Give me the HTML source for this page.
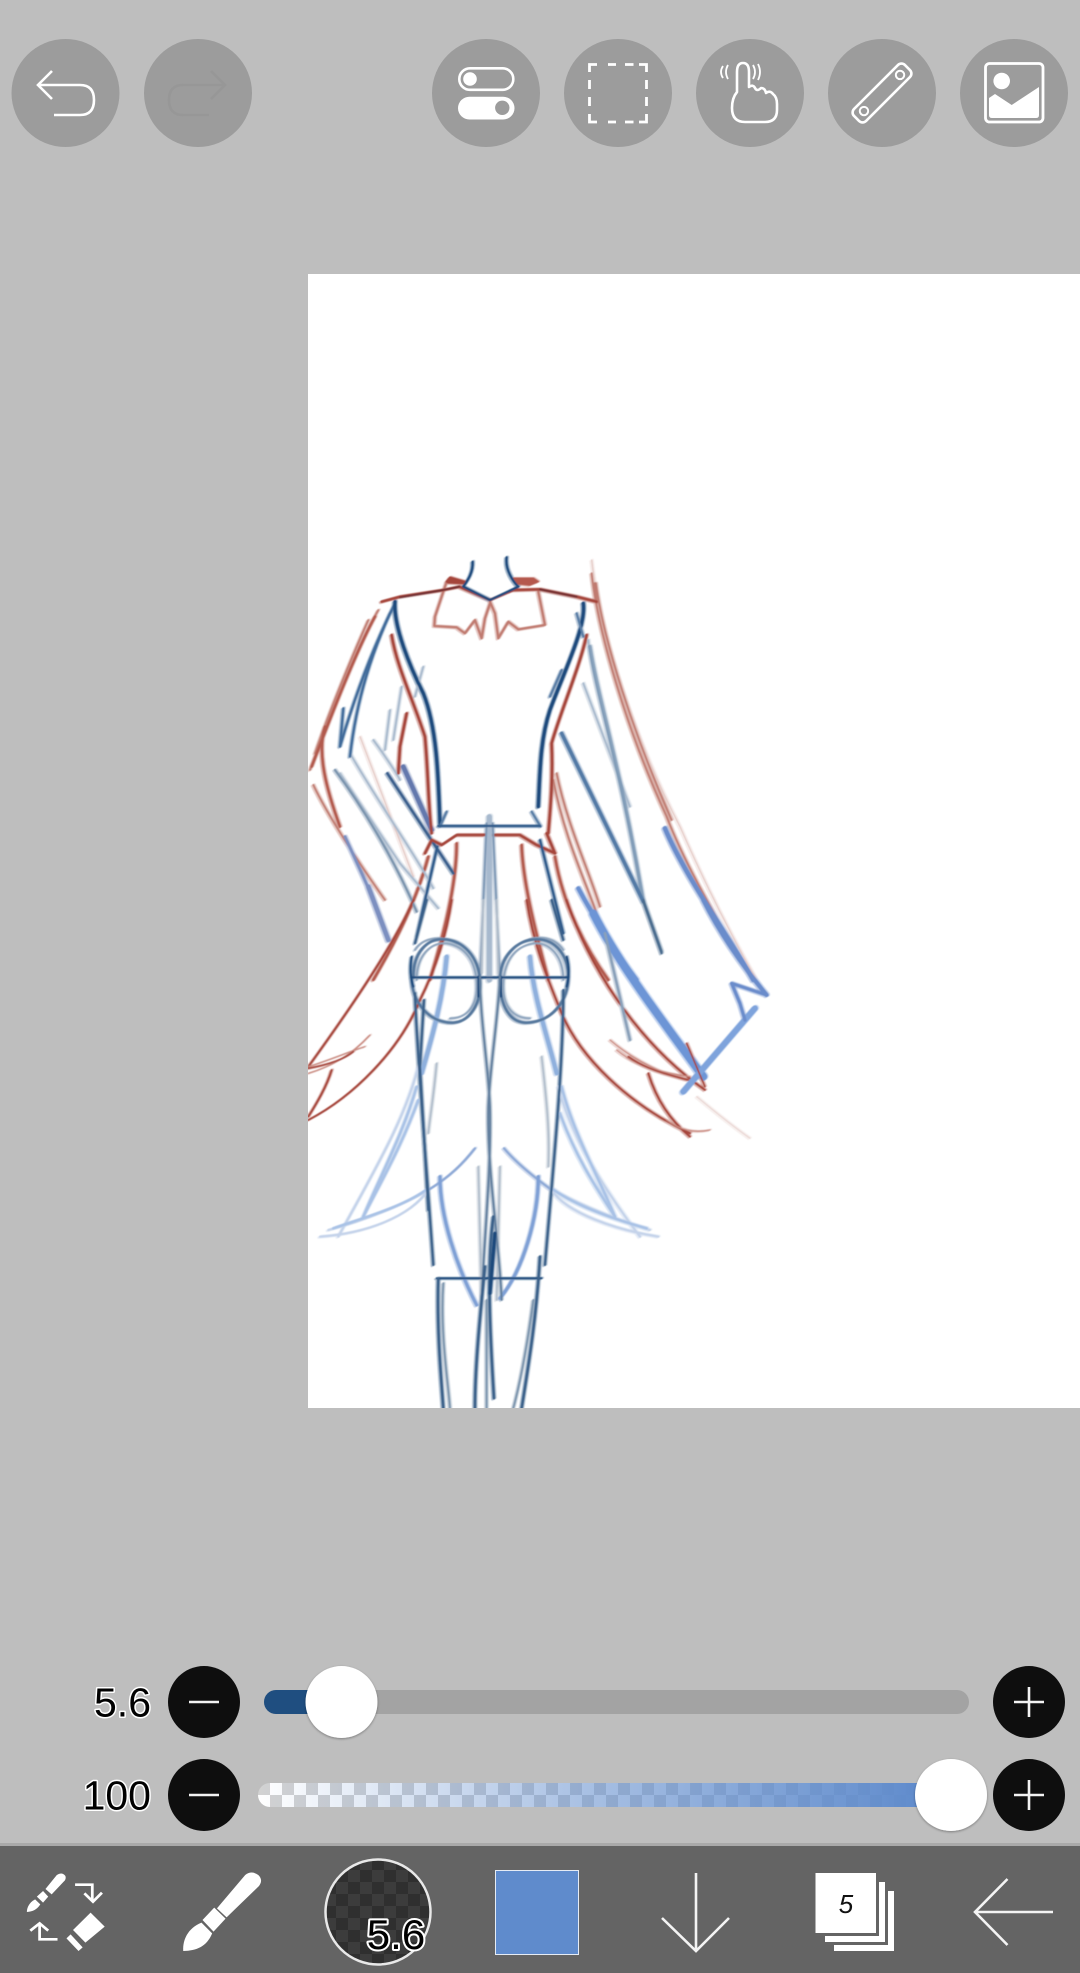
<!DOCTYPE html>
<html><head><meta charset="utf-8"><title>Drawing</title>
<style>
html,body{margin:0;padding:0;background:#bebebe;width:1080px;height:1973px;overflow:hidden}
svg{display:block}
text{font-family:"Liberation Sans",sans-serif}
</style></head><body>
<svg xmlns="http://www.w3.org/2000/svg" width="1080" height="1973" viewBox="0 0 1080 1973">
<defs>
<clipPath id="cv"><rect x="308" y="274" width="772" height="1134"/></clipPath>
<filter id="soft" x="-5%" y="-5%" width="110%" height="110%"><feGaussianBlur stdDeviation="0.6"/></filter>
<filter id="sh" x="-20%" y="-20%" width="140%" height="140%"><feDropShadow dx="0" dy="1" stdDeviation="1.2" flood-color="#000" flood-opacity=".35"/></filter>
<pattern id="chk" x="258" y="1783" width="24" height="24" patternUnits="userSpaceOnUse"><rect width="24" height="24" fill="#fff"/><rect width="12" height="12" fill="#d2d2d2"/><rect x="12" y="12" width="12" height="12" fill="#d2d2d2"/></pattern>
<pattern id="chk2" x="324" y="1858" width="24" height="24" patternUnits="userSpaceOnUse"><rect width="24" height="24" fill="#3c3c3c"/><rect width="12" height="12" fill="#2f2f2f"/><rect x="12" y="12" width="12" height="12" fill="#2f2f2f"/></pattern>
<linearGradient id="gr" gradientUnits="userSpaceOnUse" x1="258" y1="0" x2="925" y2="0"><stop offset="0" stop-color="#5f8bcc" stop-opacity="0"/><stop offset=".5" stop-color="#5f8bcc" stop-opacity=".55"/><stop offset="1" stop-color="#5f8bcc" stop-opacity="1"/></linearGradient>
</defs>
<rect width="1080" height="1973" fill="#bebebe"/>

<!-- canvas -->
<rect x="308" y="274" width="772" height="1134" fill="#fff"/>
<g clip-path="url(#cv)"><g filter="url(#soft)" fill="none" stroke-linecap="round" stroke-linejoin="round">
<use href="#sk" transform="translate(-1.6,1)" opacity=".4"/>
<use href="#sk" transform="translate(1.4,-.6)" opacity=".35"/>
<g id="sk">
<!-- upper section -->
<g transform="translate(300,540) scale(.3333)">
<g stroke="#e3c7c2" stroke-width="4"><path d="M875 60C900 280 1010 610 1140 860C1210 1020 1290 1180 1370 1320"/><path d="M180 590C230 720 290 880 340 1010"/></g>
<g stroke="#c17f74" stroke-width="6"><path d="M875 100C895 280 980 570 1100 830C1150 960 1230 1100 1300 1220"/><path d="M888 130C910 300 1000 580 1115 840"/><path d="M235 210C190 290 100 500 30 690"/><path d="M205 240C160 340 90 510 45 640"/><path d="M40 735C80 820 170 960 255 1080"/><path d="M770 700C800 850 870 1000 900 1100"/><path d="M760 720C790 880 850 1010 890 1120"/></g>
<g stroke="#b25a4e" stroke-width="8"><path d="M75 560C50 640 80 750 120 860"/><path d="M225 230C170 330 100 510 35 680"/><path d="M765 950C790 1100 860 1230 925 1320"/><path d="M220 1320C290 1200 350 1080 385 950"/><path d="M470 910C470 1050 420 1220 390 1320"/><path d="M665 915C670 1050 720 1220 745 1320"/></g>
<g stroke="#a9bacd" stroke-width="6"><path d="M305 440L280 600"/><path d="M270 510L255 630"/><path d="M220 600C250 640 290 700 300 720"/><path d="M120 700L300 970L415 1105"/><path d="M150 640C230 780 350 950 400 1045"/><path d="M850 430L990 800"/><path d="M865 300C880 450 960 670 1030 1085"/><path d="M370 380L345 470"/></g>
<path d="M105 690C180 790 280 950 350 1115" stroke="#7b94ae" stroke-width="7"/>
<path d="M870 320C895 480 960 670 1030 1085" stroke="#6f8eae" stroke-width="11" opacity=".7"/>
<g stroke="#3f6b9a" stroke-width="7"><path d="M285 190C230 300 170 450 120 620"/><path d="M270 220C220 330 170 470 150 650"/><path d="M130 505L120 620"/></g>
<path d="M785 580L1030 1085" stroke="#537aa6" stroke-width="11"/>
<path d="M1030 1085L1085 1240" stroke="#4c6d8f" stroke-width="7"/>
<path d="M310 680L395 870" stroke="#6478ad" stroke-width="14"/>
<path d="M262 700L460 1000" stroke="#3a5f8c" stroke-width="8"/>
<path d="M135 890C180 990 230 1090 265 1200" stroke="#7c8fc0" stroke-width="9"/>
<path d="M205 1040L265 1200" stroke="#7c8fc0" stroke-width="14"/>
<path d="M1095 865C1150 1000 1280 1180 1360 1320" stroke="#6b8ccb" stroke-width="14"/>
<path d="M835 1045C880 1130 950 1240 1010 1320" stroke="#6b90d0" stroke-width="13"/>
<g stroke="#a5453a" stroke-width="8"><path d="M275 285C290 380 340 480 375 590C385 700 385 800 395 880"/><path d="M320 520L300 620L295 700"/><path d="M860 285C840 380 780 520 755 610C760 720 750 820 745 880"/><path d="M375 940L395 900L425 915L470 885L660 885L710 915L765 940"/><path d="M740 880L765 940"/></g>
<g stroke="#1d4a7c" stroke-width="10"><path d="M285 185C280 260 330 380 370 460C410 560 415 700 420 850"/><path d="M850 190C860 260 790 400 750 510C720 600 720 700 715 800"/></g>
<g stroke="#5a7ea6" stroke-width="7"><path d="M830 220L850 290"/><path d="M785 390L750 470"/><path d="M440 815L420 860"/><path d="M695 815L722 860"/></g>
<path d="M568 830V1320" stroke="#a7b9ce" stroke-width="16"/>
<g stroke="#7f99b6" stroke-width="6"><path d="M560 850L540 1320"/><path d="M578 850L600 1320"/></g>
<g stroke="#2f5a8a" stroke-width="7"><path d="M415 858H720"/><path d="M412 920L350 1190"/><path d="M720 900L790 1180"/></g>
<g stroke="#c07a70" stroke-width="7"><path d="M440 125L405 230L403 258L470 262L495 280L525 240L545 295L555 235L570 190"/><path d="M715 155L735 255L655 268L625 245L595 295L585 220L570 185"/><path d="M885 130L890 190"/></g>
<path d="M245 185L300 170L430 150L478 140L570 180L640 150L720 148L830 170L890 185" stroke="#a5453a" stroke-width="8"/>
<path d="M300 172L430 150L478 140M720 148L830 170" stroke="#6d2f33" stroke-width="5"/>
<path d="M440 125L450 112L495 125L490 130L445 128Z" fill="#a5453a" stroke="#a5453a" stroke-width="6"/>
<path d="M640 115L700 115L715 125L690 135L645 130Z" fill="#b5594d" stroke="#b5594d" stroke-width="5"/>
<g stroke="#1d4a7c" stroke-width="7"><path d="M518 65C520 100 500 125 490 140"/><path d="M620 52C615 90 640 125 655 140"/><path d="M490 140L570 180L655 140"/></g>
</g>
<!-- lower section -->
<g transform="translate(300,900) scale(.3333)">
<g stroke="#c4d3ea" stroke-width="7"><path d="M85 990C200 960 320 910 385 870"/><path d="M1050 990C950 960 830 910 760 870"/><path d="M60 1010C200 1000 330 950 385 870"/><path d="M1075 1010C950 990 800 940 755 870"/><path d="M360 480C320 650 230 800 115 1010"/><path d="M775 560C810 700 900 850 1020 1010"/></g>
<g stroke="#a9c2e6" stroke-width="8"><path d="M355 600C300 750 240 850 190 950"/><path d="M780 640C830 780 900 880 945 950"/><path d="M350 560C310 700 240 830 190 950"/><path d="M785 560C820 700 900 840 945 950"/><path d="M100 985C200 950 310 920 385 865"/><path d="M1040 985C950 960 830 920 755 865"/></g>
<g stroke="#8ea9d6" stroke-width="7"><path d="M385 870C450 830 490 790 525 745"/><path d="M755 870C700 830 650 790 612 745"/></g>
<g stroke="#7fa0d5" stroke-width="10"><path d="M420 830C420 950 470 1100 530 1215"/><path d="M715 830C715 950 670 1110 600 1195"/></g>
<g stroke="#8fb0dd" stroke-width="13"><path d="M440 170C430 290 400 400 365 520"/><path d="M690 170C700 290 740 400 770 520"/></g>
<g stroke="#b3bfcc" stroke-width="6"><path d="M410 490C400 600 390 650 385 700"/><path d="M725 470C740 600 750 700 745 800"/><path d="M550 0L545 220M590 0L595 220"/><path d="M535 800L545 1200M600 800L590 1200"/></g>
<g stroke="#a5453a" stroke-width="6"><path d="M340 0C290 120 170 300 25 500"/><path d="M455 0C440 100 410 200 360 300C300 450 160 590 25 660"/><path d="M95 510C80 560 50 610 25 650"/><path d="M680 0C700 130 740 230 785 340C840 470 980 610 1170 700"/><path d="M800 0C860 180 1000 420 1215 570"/><path d="M1045 520C1070 600 1110 660 1170 710"/></g>
<g stroke="#c98a80" stroke-width="4"><path d="M25 520C90 500 150 470 210 405"/><path d="M25 500C90 480 160 450 195 440"/><path d="M930 420C1000 480 1100 530 1170 540"/><path d="M950 450C1010 500 1090 520 1170 530"/><path d="M1100 660C1140 690 1180 700 1230 690"/></g>
<path d="M25 505C80 495 130 480 160 455" stroke="#a5453a" stroke-width="5"/>
<path d="M985 470C1040 510 1110 525 1165 540" stroke="#a5453a" stroke-width="5"/>
<path d="M1190 590C1250 640 1300 680 1350 715" stroke="#e8d4d0" stroke-width="4"/>
<path d="M880 40C950 180 1070 340 1210 530" stroke="#6d95d6" stroke-width="24"/>
<path d="M915 100L990 420" stroke="#8aa0b9" stroke-width="8"/>
<path d="M1150 575L1365 325" stroke="#7ea3dc" stroke-width="18"/>
<path d="M1210 0C1260 100 1330 200 1400 285" stroke="#6b8ccb" stroke-width="13"/>
<path d="M1400 285L1340 265L1295 250L1320 310L1335 360" stroke="#6b8ccb" stroke-width="10"/>
<path d="M1160 430L1215 560" stroke="#a5453a" stroke-width="5"/>
<path d="M1030 0L1085 155" stroke="#4c6d8f" stroke-width="7"/>
<g stroke="#8ea4bd" stroke-width="6"><path d="M350 240C350 170 390 125 440 130C500 140 530 190 530 260C530 320 500 355 450 355"/><path d="M790 240C790 170 750 125 700 130C640 140 610 190 610 260C610 320 640 355 690 355"/><path d="M345 150C370 110 430 105 470 130"/><path d="M790 150C760 105 700 105 660 130"/></g>
<g stroke="#55779c" stroke-width="8"><path d="M340 230C340 160 380 115 430 118C490 120 535 170 540 240C545 310 510 365 460 368C390 370 335 310 335 230"/><path d="M600 240C600 170 650 118 710 118C770 118 805 170 805 230C805 300 760 365 680 368C630 368 600 320 600 240"/></g>
<g stroke="#1d4a7c" stroke-width="6"><path d="M335 170C330 200 330 230 340 260"/><path d="M800 170C808 200 808 230 800 260"/><path d="M333 232H805"/><path d="M535 230V290M603 230V290"/></g>
<g stroke="#3b6189" stroke-width="7"><path d="M345 280C350 450 380 800 400 1095"/><path d="M790 270C790 500 760 800 735 1095"/><path d="M380 0L345 130"/><path d="M755 0L790 120"/><path d="M372 300L360 500L385 930"/></g>
<g stroke="#64809f" stroke-width="6"><path d="M540 230C540 350 565 500 570 620C575 800 550 1050 545 1200"/><path d="M600 230C595 350 570 500 565 620C560 800 600 1050 605 1200"/></g>
<path d="M410 1135H725" stroke="#1d4a7c" stroke-width="6"/>
<g stroke="#3b6189" stroke-width="8"><path d="M415 1135C410 1300 425 1450 430 1525"/><path d="M555 1100C540 1250 525 1400 525 1525"/><path d="M720 1070C710 1250 685 1400 665 1525"/><path d="M580 950C560 1100 570 1300 582 1495"/></g>
<g stroke="#7d95ad" stroke-width="6"><path d="M430 1150C420 1300 445 1450 450 1525"/><path d="M700 1200C680 1350 660 1450 640 1525"/><path d="M560 1200V1525"/></g>
<path d="M585 1000L570 1180" stroke="#1d4a7c" stroke-width="10"/>
</g>
</g>
</g></g>

<!-- top buttons -->
<g fill="#9c9c9c"><circle cx="65.5" cy="93" r="54"/><circle cx="198" cy="93" r="54"/><circle cx="486" cy="93" r="54"/><circle cx="618" cy="93" r="54"/><circle cx="750" cy="93" r="54"/><circle cx="882" cy="93" r="54"/><circle cx="1014" cy="93" r="54"/></g>
<path d="M52 71L38 85L52 99M38 85H80Q94 85 94 100Q94 115 80 115H54" fill="none" stroke="#fff" stroke-width="2.6"/>
<path d="M211 71L225 85L211 99M225 85H183Q169 85 169 100Q169 115 183 115H209" fill="none" stroke="#979797" stroke-width="2.6"/>
<!-- toggles -->
<rect x="459.300" y="68.300" width="54" height="21.500" rx="10.700" fill="none" stroke="#fff" stroke-width="2.600"/>
<circle cx="470" cy="79" r="6.800" fill="#fff"/>
<rect x="458" y="96.700" width="56.500" height="22.800" rx="11.400" fill="#fff"/>
<circle cx="502.300" cy="107.800" r="7.200" fill="#9c9c9c"/>
<!-- selection -->
<path d="M597 64.500H589.500V72M608 64.500H616M625 64.500H633.500M639 64.500H646.500V72M589.500 80V89M589.500 97V106M589.500 114V122H597M608 122H616M625 122H633.500M639 122H646.500V114M646.500 80V89M646.500 97V106" fill="none" stroke="#fff" stroke-width="2.800"/>
<!-- hand -->
<path d="M737 92V72Q737 63 743 63Q749 63 749 72V87Q753 84 755 88Q757 92 761 88Q765 88 766 93Q770 90 773 94Q777 97 777 104V110Q777 122 765 122H745Q732 122 732 108Q732 98 737 92Z" fill="none" stroke="#fff" stroke-width="2.600" stroke-linejoin="round"/>
<path d="M723 66Q719 72 723 78M728 65Q724 72 728 79M753 65Q757 72 753 79M758 64Q762 72 758 80" fill="none" stroke="#fff" stroke-width="1.800"/>
<!-- ruler -->
<g transform="translate(882,93) rotate(-45)" fill="none" stroke="#fff"><rect x="-36" y="-8.500" width="72" height="17" rx="5" stroke-width="2.600"/><circle cx="-25.500" cy="0" r="4.200" stroke-width="2"/><circle cx="25.500" cy="0" r="4.200" stroke-width="2"/></g>
<!-- image -->
<rect x="985.500" y="63.500" width="57.500" height="58.500" rx="4" fill="none" stroke="#fff" stroke-width="2.800"/>
<circle cx="1001.700" cy="81" r="8.300" fill="#fff"/>
<path d="M989 98L995 94L1011.700 105L1039 87V115Q1039 118 1036 118H992Q989 118 989 115Z" fill="#fff"/>

<!-- sliders -->
<text x="151" y="1716.500" text-anchor="end" font-size="41" fill="#000" stroke="#fff" stroke-width="3" paint-order="stroke" stroke-linejoin="round">5.6</text>
<text x="151" y="1809.500" text-anchor="end" font-size="41" fill="#000" stroke="#fff" stroke-width="3" paint-order="stroke" stroke-linejoin="round">100</text>
<g fill="#0e0e0e"><circle cx="204" cy="1702" r="36"/><circle cx="204" cy="1795" r="36"/><circle cx="1029" cy="1702" r="36"/><circle cx="1029" cy="1795" r="36"/></g>
<g stroke="#f2f2f2" stroke-width="2.600" fill="none"><path d="M189 1702H219M189 1795H219M1014 1702H1044M1029 1687V1717M1014 1795H1044M1029 1780V1810"/></g>
<rect x="264" y="1690" width="705" height="24" rx="12" fill="#a3a3a3"/>
<path d="M276 1690H345V1714H276A12 12 0 0 1 276 1690Z" fill="#1f4e80"/>
<path d="M270 1783H950V1807H270A12 12 0 0 1 270 1783Z" fill="url(#chk)"/>
<path d="M270 1783H950V1807H270A12 12 0 0 1 270 1783Z" fill="url(#gr)"/>
<circle cx="341.500" cy="1702" r="36" fill="#fff" filter="url(#sh)"/>
<circle cx="951" cy="1795" r="36" fill="#fff" filter="url(#sh)"/>

<!-- bottom bar -->
<rect x="0" y="1843" width="1080" height="3" fill="#a9a9a9"/>
<rect x="0" y="1846" width="1080" height="127" fill="#646464"/>
<!-- swap & brush icons -->
<g transform="translate(0,1840) scale(.3444,.3333)">
<g fill="#fff">
<path d="M165 105Q180 95 190 108Q193 118 185 125L150 163L132 147Z"/>
<path d="M125 153L140 170L125 188L107 170Z"/>
<path d="M102 178L117 193C108 208 95 215 78 216C78 200 88 185 102 178Z"/>
<path d="M263 218L304 260L248 308L212 270Z"/>
<path d="M205 283L240 322L228 333L193 295Z"/>
<path d="M712 105Q730 90 750 105Q765 120 752 138L658 232L630 205Z"/>
<path d="M622 203L655 236L620 275L588 240Z"/>
<path d="M585 248L616 280C600 320 570 332 532 333C530 300 545 265 585 248Z"/>
</g>
<g fill="none" stroke="#fff" stroke-width="8"><path d="M218 134H268V180"/><path d="M245 160L270 185L296 158"/><path d="M167 298H115V255"/><path d="M88 272L115 250L140 272"/></g>
</g>
<!-- brush size -->
<circle cx="378" cy="1912" r="52.500" fill="url(#chk2)" stroke="#e8e8e8" stroke-width="2.500"/>
<text x="396" y="1949" text-anchor="middle" font-size="42" fill="#000" stroke="#fff" stroke-width="4" paint-order="stroke" stroke-linejoin="round">5.6</text>
<!-- colour -->
<rect x="495.500" y="1870.500" width="83" height="84" fill="#5f8bcc" stroke="#e6ecf5" stroke-width="1"/>
<!-- arrow down -->
<path d="M696 1873V1951M662 1918L696 1951L729 1918" fill="none" stroke="#f4f4f4" stroke-width="2.600"/>
<!-- layers -->
<path d="M885 1882V1942H825V1936H879V1882Z" fill="#fff"/>
<path d="M894 1891V1951H834V1945H888V1891Z" fill="#fff"/>
<rect x="815.500" y="1873" width="60.500" height="60" fill="#fff"/>
<text x="846" y="1913" text-anchor="middle" font-size="26" fill="#111" font-style="italic">5</text>
<!-- back -->
<path d="M1053 1912H975M1007.500 1879L975 1912L1007.500 1945" fill="none" stroke="#f4f4f4" stroke-width="2.600"/>
</svg>
</body></html>
